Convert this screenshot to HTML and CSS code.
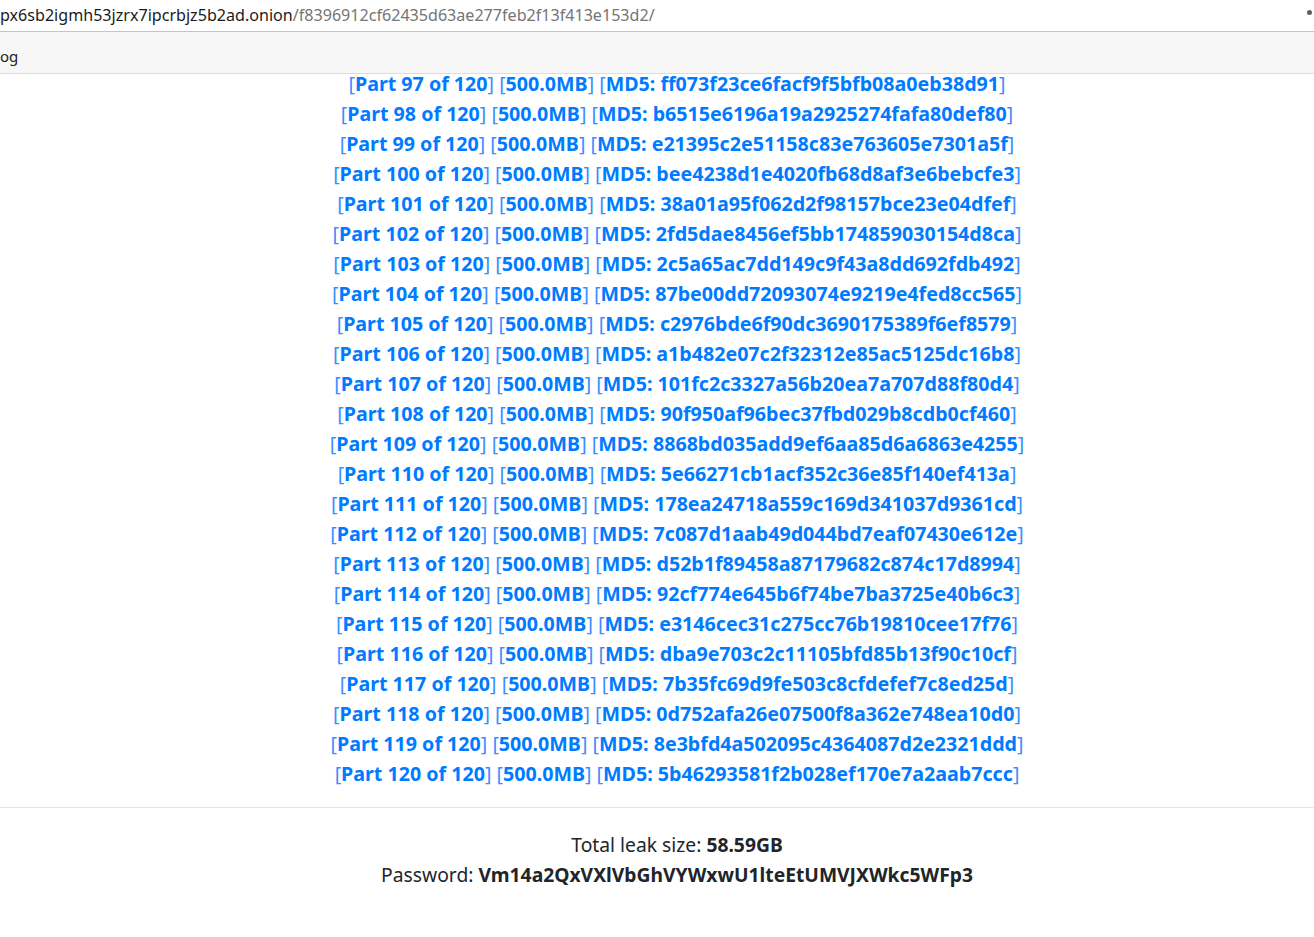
FILE: index.html
```html
<!DOCTYPE html>
<html>
<head>
<meta charset="utf-8">
<link rel="stylesheet" href="styles.css">
</head>
<body>
<div class="addressbar">
  <div class="url"><span class="host">px6sb2igmh53jzrx7ipcrbjz5b2ad.onion</span><span class="path">/f8396912cf62435d63ae277feb2f13f413e153d2/</span></div>
  <div class="menu-dot"></div>
</div>
<div class="bookmarks"><span class="bm">og</span></div>
<div class="page">
  <div class="parts">
    <div class="row">[<a class="lnk">Part 97 of 120</a>] [<a class="lnk">500.0MB</a>] [<a class="lnk">MD5: ff073f23ce6facf9f5bfb08a0eb38d91</a>]</div>
    <div class="row">[<a class="lnk">Part 98 of 120</a>] [<a class="lnk">500.0MB</a>] [<a class="lnk">MD5: b6515e6196a19a2925274fafa80def80</a>]</div>
    <div class="row">[<a class="lnk">Part 99 of 120</a>] [<a class="lnk">500.0MB</a>] [<a class="lnk">MD5: e21395c2e51158c83e763605e7301a5f</a>]</div>
    <div class="row">[<a class="lnk">Part 100 of 120</a>] [<a class="lnk">500.0MB</a>] [<a class="lnk">MD5: bee4238d1e4020fb68d8af3e6bebcfe3</a>]</div>
    <div class="row">[<a class="lnk">Part 101 of 120</a>] [<a class="lnk">500.0MB</a>] [<a class="lnk">MD5: 38a01a95f062d2f98157bce23e04dfef</a>]</div>
    <div class="row">[<a class="lnk">Part 102 of 120</a>] [<a class="lnk">500.0MB</a>] [<a class="lnk">MD5: 2fd5dae8456ef5bb174859030154d8ca</a>]</div>
    <div class="row">[<a class="lnk">Part 103 of 120</a>] [<a class="lnk">500.0MB</a>] [<a class="lnk">MD5: 2c5a65ac7dd149c9f43a8dd692fdb492</a>]</div>
    <div class="row">[<a class="lnk">Part 104 of 120</a>] [<a class="lnk">500.0MB</a>] [<a class="lnk">MD5: 87be00dd72093074e9219e4fed8cc565</a>]</div>
    <div class="row">[<a class="lnk">Part 105 of 120</a>] [<a class="lnk">500.0MB</a>] [<a class="lnk">MD5: c2976bde6f90dc3690175389f6ef8579</a>]</div>
    <div class="row">[<a class="lnk">Part 106 of 120</a>] [<a class="lnk">500.0MB</a>] [<a class="lnk">MD5: a1b482e07c2f32312e85ac5125dc16b8</a>]</div>
    <div class="row">[<a class="lnk">Part 107 of 120</a>] [<a class="lnk">500.0MB</a>] [<a class="lnk">MD5: 101fc2c3327a56b20ea7a707d88f80d4</a>]</div>
    <div class="row">[<a class="lnk">Part 108 of 120</a>] [<a class="lnk">500.0MB</a>] [<a class="lnk">MD5: 90f950af96bec37fbd029b8cdb0cf460</a>]</div>
    <div class="row">[<a class="lnk">Part 109 of 120</a>] [<a class="lnk">500.0MB</a>] [<a class="lnk">MD5: 8868bd035add9ef6aa85d6a6863e4255</a>]</div>
    <div class="row">[<a class="lnk">Part 110 of 120</a>] [<a class="lnk">500.0MB</a>] [<a class="lnk">MD5: 5e66271cb1acf352c36e85f140ef413a</a>]</div>
    <div class="row">[<a class="lnk">Part 111 of 120</a>] [<a class="lnk">500.0MB</a>] [<a class="lnk">MD5: 178ea24718a559c169d341037d9361cd</a>]</div>
    <div class="row">[<a class="lnk">Part 112 of 120</a>] [<a class="lnk">500.0MB</a>] [<a class="lnk">MD5: 7c087d1aab49d044bd7eaf07430e612e</a>]</div>
    <div class="row">[<a class="lnk">Part 113 of 120</a>] [<a class="lnk">500.0MB</a>] [<a class="lnk">MD5: d52b1f89458a87179682c874c17d8994</a>]</div>
    <div class="row">[<a class="lnk">Part 114 of 120</a>] [<a class="lnk">500.0MB</a>] [<a class="lnk">MD5: 92cf774e645b6f74be7ba3725e40b6c3</a>]</div>
    <div class="row">[<a class="lnk">Part 115 of 120</a>] [<a class="lnk">500.0MB</a>] [<a class="lnk">MD5: e3146cec31c275cc76b19810cee17f76</a>]</div>
    <div class="row">[<a class="lnk">Part 116 of 120</a>] [<a class="lnk">500.0MB</a>] [<a class="lnk">MD5: dba9e703c2c11105bfd85b13f90c10cf</a>]</div>
    <div class="row">[<a class="lnk">Part 117 of 120</a>] [<a class="lnk">500.0MB</a>] [<a class="lnk">MD5: 7b35fc69d9fe503c8cfdefef7c8ed25d</a>]</div>
    <div class="row">[<a class="lnk">Part 118 of 120</a>] [<a class="lnk">500.0MB</a>] [<a class="lnk">MD5: 0d752afa26e07500f8a362e748ea10d0</a>]</div>
    <div class="row">[<a class="lnk">Part 119 of 120</a>] [<a class="lnk">500.0MB</a>] [<a class="lnk">MD5: 8e3bfd4a502095c4364087d2e2321ddd</a>]</div>
    <div class="row">[<a class="lnk">Part 120 of 120</a>] [<a class="lnk">500.0MB</a>] [<a class="lnk">MD5: 5b46293581f2b028ef170e7a2aab7ccc</a>]</div>
  </div>
  <hr class="sep">
  <div class="summary">
    <div class="line">Total leak size: <b>58.59GB</b></div>
    <div class="line">Password: <b>Vm14a2QxVXlVbGhVYWxwU1lteEtUMVJXWkc5WFp3</b></div>
  </div>
</div>
</body>
</html>
```

FILE: styles.css
```css
html, body {
  margin: 0;
  padding: 0;
  background: #ffffff;
}
body {
  font-family: "Noto Sans", "Open Sans", sans-serif;
  color: #212529;
  overflow: hidden;
}
.addressbar {
  height: 31px;
  border-bottom: 1px solid #c4c4c4;
  display: flex;
  align-items: center;
  justify-content: space-between;
  background: #ffffff;
}
.url {
  font-size: 16.1px;
  white-space: nowrap;
  margin-top: -2px;
}
.host { color: #1b1b1b; }
.path { color: #757575; }
.menu-dot {
  width: 5px;
  height: 5px;
  border-radius: 50%;
  background: #5f5f5f;
  margin-right: 2px;
  margin-bottom: 6px;
}
.bookmarks {
  height: 41px;
  background: #f7f7f7;
  border-bottom: 1px solid #dddddd;
  display: flex;
  align-items: center;
}
.bm {
  font-size: 15px;
  color: #222;
  margin-top: 6px;
}
.page {
  padding-left: 40px;
}
.parts {
  text-align: center;
  font-size: 19.65px;
  line-height: 30px;
  color: #3b8eff;
}
.row { white-space: nowrap; }
.row:first-child {
  line-height: 20px;
  margin-bottom: 5px;
}
.lnk {
  color: #007bff;
  font-weight: 700;
  text-decoration: none;
}
.sep {
  border: 0;
  border-top: 1px solid #e5e5e5;
  margin: 18px 0 22px -40px;
}
.summary {
  text-align: center;
  font-size: 19.3px;
  line-height: 30px;
  color: #212529;
}
.summary b { font-weight: 700; }
```
